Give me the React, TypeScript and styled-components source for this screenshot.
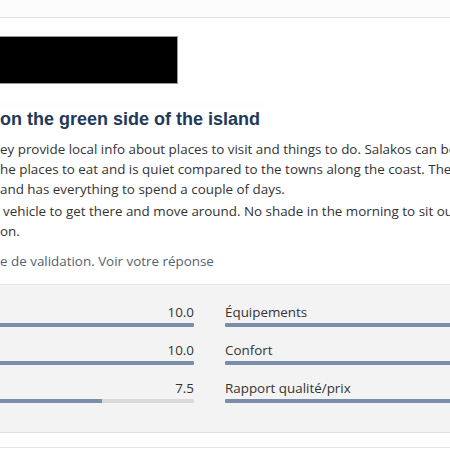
import React from "react";
import styled, { createGlobalStyle } from "styled-components";

const Global = createGlobalStyle`
  html, body { margin: 0; padding: 0; background: #ffffff; }
  body { width: 450px; height: 450px; overflow: hidden; }
`;

const Page = styled.div`
  width: 450px;
  height: 450px;
  overflow: hidden;
  background: #ffffff;
  font-family: "Open Sans", "Noto Sans", sans-serif;
  color: #333333;
`;

const TopBar = styled.div`
  height: 17px;
  background: #fcfcfc;
  border-bottom: 1px solid #e2e2e2;
`;

const Redacted = styled.div`
  margin-top: 19px;
  width: 177px;
  height: 46px;
  background: #000000;
  box-shadow: 0 0 0 1px #9a9a9a;
`;

const Ghost = styled.div`
  margin-top: 19px;
  height: 6px;
  width: 265px;
  background: #fdfdfd;
`;

const Title = styled.h2`
  margin: 0;
  font-family: "Liberation Sans", Arial, sans-serif;
  font-weight: 700;
  font-size: 18px;
  line-height: 22px;
  color: #1f3a5a;
  white-space: nowrap;
`;

const Body = styled.p<{ $top?: number }>`
  margin: ${(p) => p.$top ?? 0}px 0 0 0;
  font-size: 13.4px;
  line-height: 20px;
  white-space: nowrap;
`;

const Line = styled.span<{ $indent?: number }>`
  display: block;
  padding-left: ${(p) => p.$indent ?? 0}px;
`;

const Meta = styled.p`
  margin: 10px 0 0 0;
  font-size: 13.4px;
  line-height: 20px;
  color: #55626e;
  white-space: nowrap;
`;

const Panel = styled.div`
  margin-top: 13px;
  height: 129px;
  padding-top: 18px;
  background: #f3f3f3;
  border-top: 1px solid #e6e6e6;
  border-bottom: 1px solid #e0e0e0;
`;

const Grid = styled.div`
  display: grid;
  margin-left: -174px;
  grid-template-columns: 368px 368px;
  column-gap: 31px;
  row-gap: 14px;
`;

const Rating = styled.div`
  display: flex;
  flex-direction: column;
  gap: 2px;
`;

const Label = styled.div<{ $align: "left" | "right" }>`
  font-size: 13.4px;
  line-height: 18px;
  color: #333333;
  text-align: ${(p) => p.$align};
  white-space: nowrap;
`;

const Track = styled.div`
  height: 4px;
  background: #dadada;
  border-radius: 1px;
  overflow: hidden;
`;

const Fill = styled.div`
  height: 100%;
  background: #7a8eac;
`;

const Footer = styled.div`
  margin-top: 14px;
  border-top: 1px solid #e4e4e4;
`;

const rows: [number, string][] = [
  [10, "Équipements"],
  [10, "Confort"],
  [7.5, "Rapport qualité/prix"],
];

export default function App() {
  return (
    <Page>
      <Global />
      <TopBar />
      <Redacted />
      <Ghost />
      <Title>on the green side of the island</Title>
      <Body $top={9}>
        <Line>ey provide local info about places to visit and things to do. Salakos can be</Line>
        <Line>he places to eat and is quiet compared to the towns along the coast. There</Line>
        <Line>and has everything to spend a couple of days.</Line>
      </Body>
      <Body $top={2}>
        <Line $indent={3}>vehicle to get there and move around. No shade in the morning to sit out</Line>
        <Line>on.</Line>
      </Body>
      <Meta>e de validation. Voir votre réponse</Meta>
      <Panel>
        <Grid>
          {rows.map(([score, label]) => (
            <React.Fragment key={label}>
              <Rating>
                <Label $align="right">{score.toFixed(1)}</Label>
                <Track>
                  <Fill style={{ width: `${score * 10}%` }} />
                </Track>
              </Rating>
              <Rating>
                <Label $align="left">{label}</Label>
                <Track>
                  <Fill style={{ width: "100%" }} />
                </Track>
              </Rating>
            </React.Fragment>
          ))}
        </Grid>
      </Panel>
      <Footer />
    </Page>
  );
}
